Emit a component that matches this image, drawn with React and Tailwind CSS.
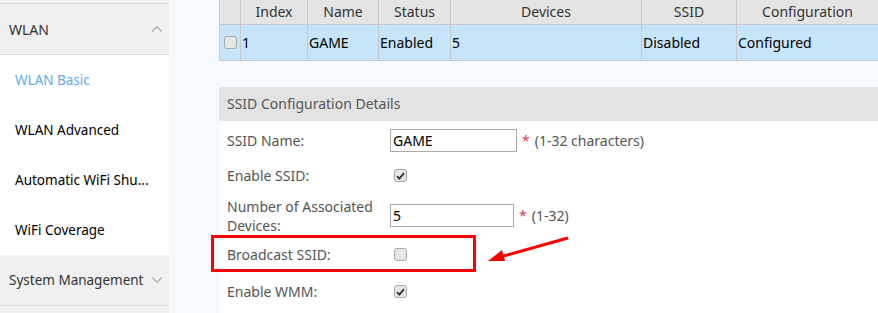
import { ChevronUp, ChevronDown } from 'lucide-react'

const font = { fontFamily: '"Noto Sans", "Open Sans", Arial, sans-serif' }

const cols = [
  { key: 'chk', w: 21, label: '' },
  { key: 'index', w: 67, label: 'Index' },
  { key: 'name', w: 71, label: 'Name' },
  { key: 'status', w: 72, label: 'Status' },
  { key: 'devices', w: 191, label: 'Devices' },
  { key: 'ssid', w: 95, label: 'SSID' },
  { key: 'config', w: 142, label: 'Configuration' },
]

const row = { chk: '', index: '1', name: 'GAME', status: 'Enabled', devices: '5', ssid: 'Disabled', config: 'Configured' }

function Box({ checked }) {
  return (
    <span className="inline-flex w-[13px] h-[13px] items-center justify-center rounded-[3px] border border-[#a9a9a9] bg-[#e6e6e6]">
      {checked && (
        <svg width="9" height="8" viewBox="0 0 9 8">
          <path d="M1 4.2 L3.4 6.6 L8 1.2" fill="none" stroke="#333" strokeWidth="1.8" />
        </svg>
      )}
    </span>
  )
}

function Sidebar() {
  const items = ['WLAN Basic', 'WLAN Advanced', 'Automatic WiFi Shu...', 'WiFi Coverage']
  return (
    <div className="w-[169px] shrink-0 bg-[#f0f0f0] flex flex-col">
      <div className="h-[3px]" />
      <div className="h-[52px] border-y border-[#dcdcdc] flex items-center justify-between pl-[9px] pr-[3px] text-[14px] text-[#333]">
        <span>WLAN</span>
        <ChevronUp size={18} strokeWidth={1.5} className="text-[#aaa]" />
      </div>
      <div className="bg-white">
        {items.map((t, i) => (
          <div
            key={t}
            className={`h-[50px] flex items-center pl-[15px] text-[13.5px] whitespace-nowrap ${i === 0 ? 'text-[#5eaaf0]' : 'text-black'}`}
          >
            {t}
          </div>
        ))}
      </div>
      <div className="h-[51px] border-b border-[#dcdcdc] flex items-center justify-between pl-[9px] pr-[3px] text-[13.5px] text-[#333] whitespace-nowrap">
        <span>System Management</span>
        <ChevronDown size={18} strokeWidth={1.5} className="text-[#aaa]" />
      </div>
    </div>
  )
}

function Field({ label, h, children }) {
  return (
    <div className="flex items-center" style={{ height: h }}>
      <div className="w-[171px] shrink-0 pl-2 pr-[4px] text-[14px] leading-[19px] text-[#555]">{label}</div>
      <div className="flex items-center">{children}</div>
    </div>
  )
}

export default function App() {
  return (
    <div className="w-[878px] h-[313px] overflow-hidden flex bg-[#f5f8fc] relative" style={font}>
      <Sidebar />
      <div className="flex-1 pl-[50px] flex flex-col">
        {/* SSID list */}
        <table className="border-collapse table-fixed text-[14px] w-[659px]">
          <thead>
            <tr className="h-[24px] bg-[#e4e4e4] text-[#333]">
              {cols.map(c => (
                <th key={c.key} style={{ width: c.w }} className="border border-[#c8c8c8] border-t-0 font-normal text-center leading-[22px] whitespace-nowrap">
                  {c.label}
                </th>
              ))}
            </tr>
          </thead>
          <tbody>
            <tr className="h-[36px] bg-[#c6e5fb] text-black">
              {cols.map(c => (
                <td key={c.key} className="border border-[#c8c8c8] px-[1px] text-left whitespace-nowrap">
                  {c.key === 'chk' ? <span className="pl-[3px] flex"><Box /></span> : row[c.key]}
                </td>
              ))}
            </tr>
          </tbody>
        </table>

        {/* Details panel */}
        <div className="mt-[26px] bg-white flex-1">
          <div className="h-[34px] bg-[#e3e3e3] flex items-center pl-2 text-[14px] text-[#555]">
            SSID Configuration Details
          </div>
          <div className="pt-[2px]">
            <Field label="SSID Name:" h={35}>
              <input
                readOnly
                value="GAME"
                className="w-[127px] h-[23px] border border-[#aaa] px-[2px] text-[14px] text-black outline-none"
              />
              <span className="ml-[5px] text-[#e8385b] text-[14px]">*</span>
              <span className="ml-[5px] text-[14px] text-[#555]">(1-32 characters)</span>
            </Field>
            <Field label="Enable SSID:" h={36}>
              <span className="pl-[4px] flex"><Box checked /></span>
            </Field>
            <Field label="Number of Associated Devices:" h={44}>
              <input
                readOnly
                value="5"
                className="w-[124px] h-[23px] border border-[#aaa] px-[2px] text-[14px] text-black outline-none"
              />
              <span className="ml-[5px] text-[#e8385b] text-[14px]">*</span>
              <span className="ml-[5px] text-[14px] text-[#555]">(1-32)</span>
            </Field>
            <Field label="Broadcast SSID:" h={34}>
              <span className="pl-[4px] flex"><Box /></span>
            </Field>
            <Field label="Enable WMM:" h={40}>
              <span className="pl-[4px] flex"><Box checked /></span>
            </Field>
          </div>
        </div>
      </div>

      {/* annotation */}
      <div className="absolute left-[211px] top-[235px] w-[265px] h-[37px] border-[3px] border-[#ff0000]" />
      <svg className="absolute left-[480px] top-[230px]" width="100" height="40" viewBox="0 0 100 40">
        <line x1="88" y1="8" x2="20" y2="27" stroke="#ff0000" strokeWidth="3" />
        <path d="M8 31 L22 20 L25 31 Z" fill="#ff0000" />
      </svg>
    </div>
  )
}
